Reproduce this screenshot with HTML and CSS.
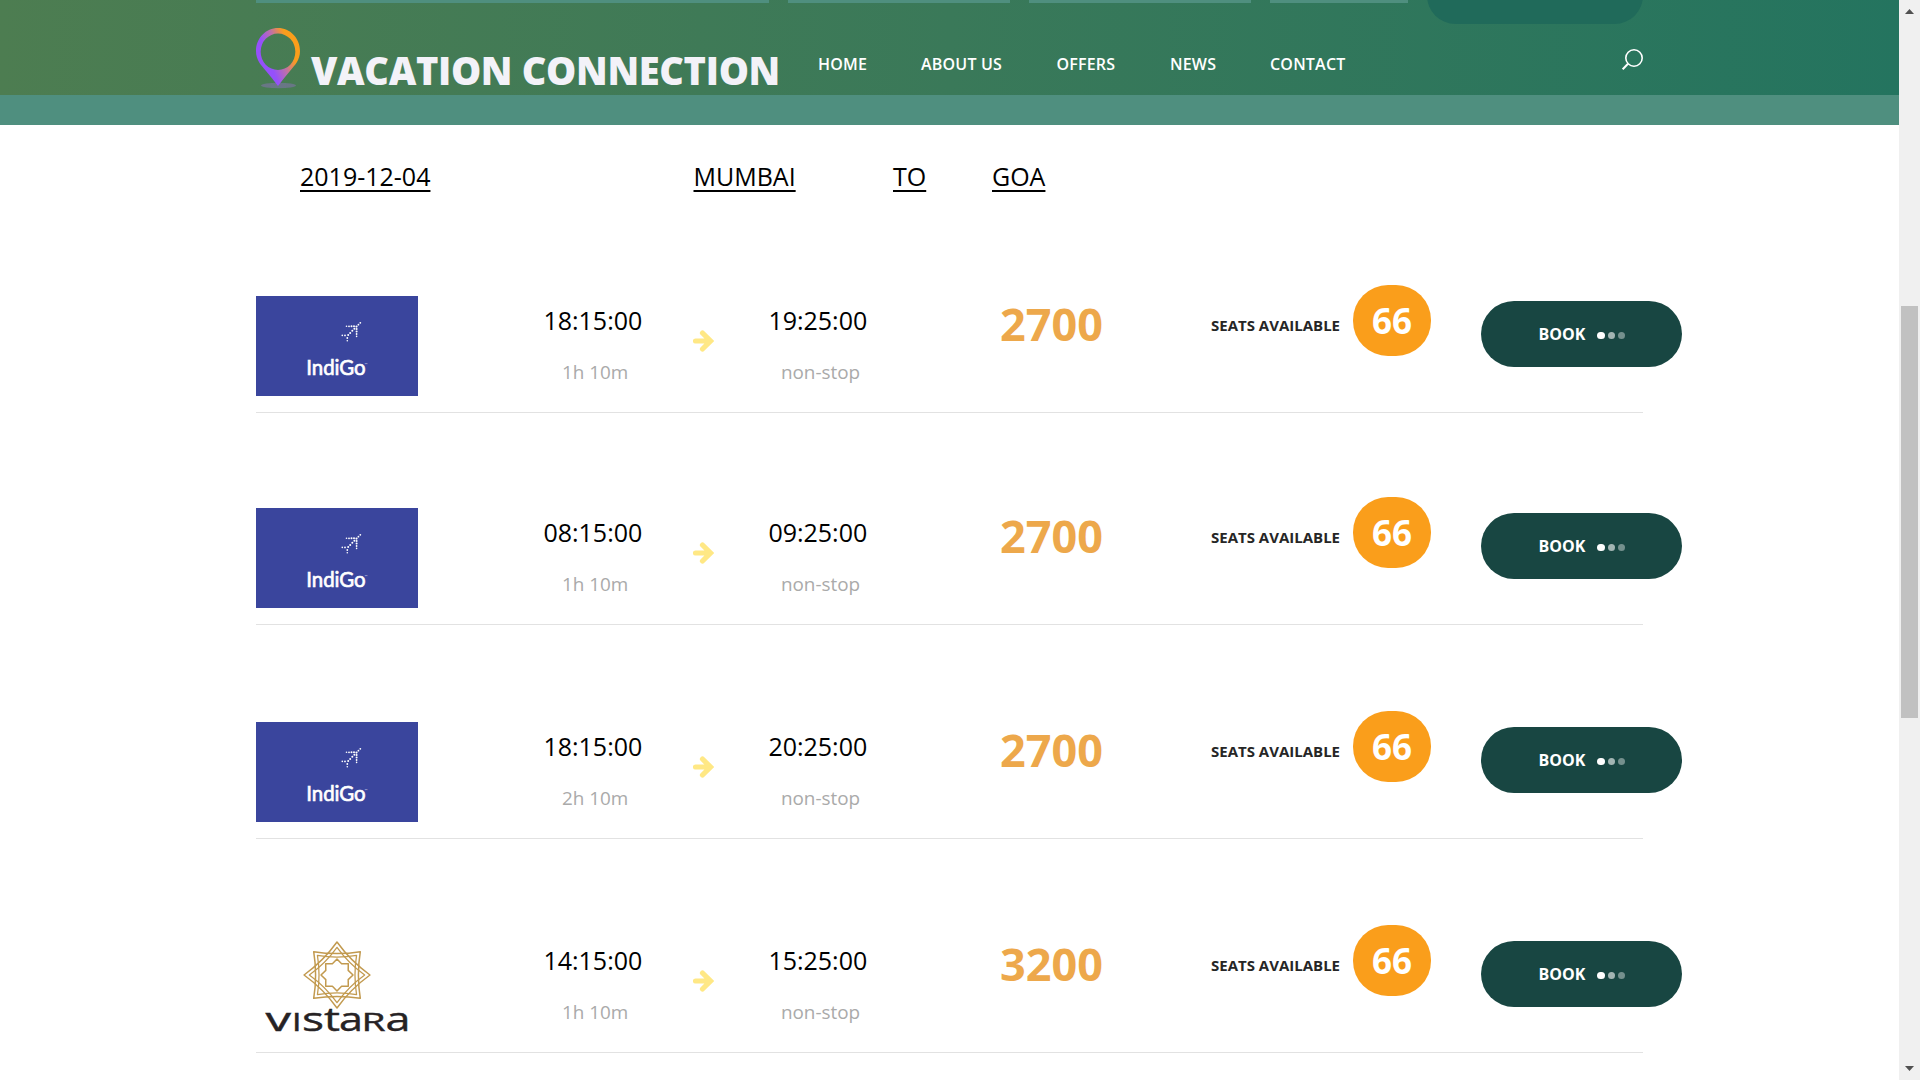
FILE: index.html
```
<!DOCTYPE html>
<html lang="en">
<head>
<meta charset="utf-8">
<title>Vacation Connection</title>
<link rel="stylesheet" href="styles.css">
</head>
<body>
<svg class="defs" width="0" height="0">
  <defs>
    <linearGradient id="pin" gradientUnits="userSpaceOnUse" x1="0" y1="0" x2="23" y2="-9.2">
      <stop offset="0" stop-color="#9550fb"/><stop offset="0.5" stop-color="#c070a8"/><stop offset="0.85" stop-color="#ee9040"/><stop offset="1" stop-color="#fa9e1b"/>
    </linearGradient>
    <symbol id="indigo" viewBox="0 0 162 100">
      <rect width="162" height="100" fill="#3a459d"/>
      <g fill="#fff">
        <circle cx="104.3" cy="26.8" r=".9"/><circle cx="102.4" cy="28.7" r=".9"/><circle cx="100.5" cy="30.6" r="1.1"/><circle cx="98.4" cy="32.7" r="1"/><circle cx="96.3" cy="34.8" r="1"/><circle cx="94.2" cy="36.9" r="1"/><circle cx="92.2" cy="39" r="1"/>
        <circle cx="98" cy="30.3" r="1"/><circle cx="95.5" cy="30.3" r="1"/><circle cx="93" cy="30.3" r=".9"/><circle cx="90.5" cy="30.3" r=".8"/>
        <circle cx="100.6" cy="33" r="1"/><circle cx="100.6" cy="35.5" r="1"/><circle cx="100.6" cy="38" r=".9"/><circle cx="100.6" cy="40.4" r=".8"/>
        <circle cx="89" cy="39.4" r=".9"/><circle cx="86.3" cy="39.4" r=".8"/><circle cx="91.3" cy="42" r=".9"/><circle cx="91.3" cy="44.8" r=".8"/>
      </g>
      <text class="indigo-word" x="50.2" y="79.200" textLength="59.500" lengthAdjust="spacingAndGlyphs">IndiGo</text>
      <text class="indigo-mark" x="108.500" y="70">™</text>
    </symbol>
    <path id="curvedsquare" d="M-23.3-23.3Q0-19.500 23.3-23.3Q19.500 0 23.3 23.3Q0 19.500-23.3 23.3Q-19.500 0-23.3-23.3Z"/>
    <path id="star" d="M0-16L4.6-11.2L11.3-11.3L11.2-4.6L16 0L11.2 4.6L11.3 11.3L4.6 11.2L0 16L-4.6 11.2L-11.3 11.3L-11.2 4.6L-16 0L-11.2-4.6L-11.3-11.3L-4.6-11.2Z"/>
    <symbol id="vistara" viewBox="0 0 162 100">
      <g transform="translate(81 39)" fill="none" stroke="#c29a4f" stroke-width="1.5" stroke-linejoin="round">
        <use href="#curvedsquare"/><use href="#curvedsquare" transform="rotate(45)"/>
        <use href="#curvedsquare" transform="scale(.84)"/><use href="#curvedsquare" transform="rotate(45) scale(.84)"/>
        <use href="#star" fill="#fff"/>
      </g>
      <g class="vistara-word">
        <text class="cap" x="9.500" y="95.3" textLength="25.500" lengthAdjust="spacingAndGlyphs">v</text>
        <text class="cap" x="36" y="95.3" textLength="9.500" lengthAdjust="spacingAndGlyphs">ı</text>
        <text class="cap" x="46" y="95.3" textLength="22" lengthAdjust="spacingAndGlyphs">s</text>
        <text x="68" y="95.3" textLength="16" lengthAdjust="spacingAndGlyphs">t</text>
        <text x="83" y="95.3" textLength="24" lengthAdjust="spacingAndGlyphs">a</text>
        <text class="small" x="105.500" y="95.3" textLength="24" lengthAdjust="spacingAndGlyphs">R</text>
        <text x="129.500" y="95.3" textLength="25" lengthAdjust="spacingAndGlyphs">a</text>
      </g>
    </symbol>
    <symbol id="arrow" viewBox="0 0 21 22">
      <path d="M2.5 11H15M9.5 3L17.5 11L9.500 19" fill="none" stroke="#ffe885" stroke-width="5.2" stroke-linecap="round" stroke-linejoin="miter"/>
    </symbol>
  </defs>
</svg>
<div class="window">
  <div class="page">
    <header class="header">
      <div class="search-fields"><span></span><span></span><span></span><span></span><b></b></div>
      <div class="brand">
        <svg class="pin" viewBox="0 0 44 62"><ellipse cx="22.5" cy="57.500" rx="17.5" ry="2.8" fill="#8a72b8" opacity=".5"/><path fill="url(#pin)" fill-rule="evenodd" d="M22 0C34 0 44 10 44 23C44 32 39 37 34 43Q28 50 22 58Q16 50 10 43C5 37 0 32 0 23C0 10 10 0 22 0ZM22 5.500A17.300 18.200 0 1 0 22 42A17.300 18.200 0 1 0 22 5.500Z"/></svg>
        <span class="brand-name">VACATION CONNECTION</span>
      </div>
      <nav class="nav"><a>HOME</a><a>ABOUT US</a><a>OFFERS</a><a>NEWS</a><a>CONTACT</a></nav>
      <svg class="search" viewBox="0 0 21 21" fill="none" stroke="#fff" stroke-width="1.6"><circle cx="12" cy="9" r="8.200"/><path d="M6 14.700L.7 20.300" stroke-width="2"/></svg>
    </header>
    <div class="band"></div>
    <main class="results">
      <div class="route"><u>2019-12-04</u><u>MUMBAI</u><u>TO</u><u>GOA</u></div>
      <section class="flight">
        <svg class="logo"><use href="#indigo"/></svg>
        <div class="time">18:15:00<small>1h 10m</small></div>
        <svg class="arrow"><use href="#arrow"/></svg>
        <div class="time arrive">19:25:00<small>non-stop</small></div>
        <div class="price">2700</div><div class="seats">SEATS AVAILABLE</div><div class="count">66</div>
        <a class="book">BOOK<i></i><i></i><i></i></a>
      </section>
      <section class="flight">
        <svg class="logo"><use href="#indigo"/></svg>
        <div class="time">08:15:00<small>1h 10m</small></div>
        <svg class="arrow"><use href="#arrow"/></svg>
        <div class="time arrive">09:25:00<small>non-stop</small></div>
        <div class="price">2700</div><div class="seats">SEATS AVAILABLE</div><div class="count">66</div>
        <a class="book">BOOK<i></i><i></i><i></i></a>
      </section>
      <section class="flight">
        <svg class="logo"><use href="#indigo"/></svg>
        <div class="time">18:15:00<small>2h 10m</small></div>
        <svg class="arrow"><use href="#arrow"/></svg>
        <div class="time arrive">20:25:00<small>non-stop</small></div>
        <div class="price">2700</div><div class="seats">SEATS AVAILABLE</div><div class="count">66</div>
        <a class="book">BOOK<i></i><i></i><i></i></a>
      </section>
      <section class="flight">
        <svg class="logo"><use href="#vistara"/></svg>
        <div class="time">14:15:00<small>1h 10m</small></div>
        <svg class="arrow"><use href="#arrow"/></svg>
        <div class="time arrive">15:25:00<small>non-stop</small></div>
        <div class="price">3200</div><div class="seats">SEATS AVAILABLE</div><div class="count">66</div>
        <a class="book">BOOK<i></i><i></i><i></i></a>
      </section>
    </main>
  </div>
  <div class="scrollbar">
    <svg width="9" height="5" viewBox="0 0 9 5"><path d="M0 5L4.500 0L9 5Z" fill="#505050"/></svg>
    <div class="thumb"></div>
    <svg width="9" height="5" viewBox="0 0 9 5"><path d="M0 0L4.500 5L9 0Z" fill="#505050"/></svg>
  </div>
</div>
</body>
</html>
```
FILE: styles.css
```
* { box-sizing: border-box; }
body { margin: 0; font-family: "Open Sans", sans-serif; background: #fff; overflow: hidden; }
.defs { position: absolute; }
.window { display: flex; height: 1080px; overflow: hidden; }
.page { flex: 1; min-width: 0; overflow: hidden; }
.header {
  position: relative; display: flex; align-items: flex-start; height: 95px; padding-left: 256px;
  background: linear-gradient(90deg, #4d7d51, #3a7959 50%, #24745f); overflow: hidden;
}
.search-fields {
  position: absolute; top: 0; left: 256px; display: grid; align-items: start;
  grid-template-columns: 513px 222px 222px 138px 217px; column-gap: 19px;
}
.search-fields span { height: 3px; background: #4f8f7f; }
.search-fields b { height: 57px; margin-top: -33px; width: 216px; border-radius: 33px; background: #206a5a; }
.brand { display: flex; width: 562px; padding-top: 28px; }
.pin { width: 44px; height: 62px; flex: none; }
.brand-name { margin: 16px 0 0 11px; font-size: 38px; line-height: 52px; font-weight: 800; letter-spacing: -.33px; color: #f3f2f8; white-space: nowrap; }
.nav { display: grid; grid-template-columns: 103px 135.500px 113.500px 100px 352px; padding-top: 54px; font-size: 16px; line-height: 20px; font-weight: 600; letter-spacing: .2px; color: #fff; white-space: nowrap; }
.search { width: 21px; height: 21px; margin-top: 49px; flex: none; }
.band { height: 30px; background: #4f8f7f; }
.results { padding-left: 256px; height: 955px; overflow: hidden; }
.route {
  display: grid; grid-template-columns: 393.500px 199.500px 99px 100px; padding: 32px 0 0 44px; height: 74px;
  font-size: 25px; line-height: 38px; color: #000;
}
.route u { text-decoration-thickness: 2px; text-underline-offset: 4px; justify-self: start; }
.flight {
  display: grid; grid-template-columns: 287.400px 149.600px 75.400px 231.600px 211px 142px 128px 201px; align-items: start; align-content: end;
  width: 1387px; height: 214px; padding-bottom: 16px; border-bottom: 1px solid #e2e2e2; white-space: nowrap;
}
.flight:nth-of-type(2) { height: 212px; }
.logo { width: 162px; height: 100px; margin-top: 11px; }
.indigo-word { font: 400 22px Lato, sans-serif; fill: #fff; stroke: #fff; stroke-width: .7px; }
.indigo-mark { font: 400 4px Lato, sans-serif; fill: #c8cce8; }
.vistara-word { font: 400 33px "Open Sans", sans-serif; fill: #262224; stroke: #262224; stroke-width: .4px; }
.vistara-word .small { font-size: 25px; }
.time { margin-top: 20px; font-size: 25px; line-height: 30px; color: #000; }
.time small { display: block; margin: 22px 0 0 18.500px; font-size: 18.900px; line-height: 30px; color: #aaa; }
.arrive small { margin-left: 12.500px; }
.arrow { width: 21px; height: 22px; margin-top: 45px; }
.price { margin-top: 9px; font-size: 45px; line-height: 60px; font-weight: 700; color: #eda84b; }
.seats { margin-top: 30px; font-size: 15px; line-height: 20px; font-weight: 700; color: #262626; }
.count { width: 78px; height: 71px; border-radius: 35px; background: #fa9e1b; color: #fff; font-size: 35px; line-height: 71px; font-weight: 700; text-align: center; }
.book { display: flex; align-items: center; gap: 3px; height: 66px; width: 201px; margin-top: 16px; padding-left: 57.500px; border-radius: 33px; background: #184642; color: #fff; font-size: 16px; font-weight: 700; }
.book i { width: 7px; height: 7px; border-radius: 4px; background: #fff; opacity: .5; margin-top: 2px; }
.book i:first-of-type { width: 8px; margin-left: 9px; opacity: 1; }
.book i:nth-of-type(2) { opacity: .6; }
.book i:nth-of-type(3) { opacity: .4; }
.scrollbar { display: flex; flex-direction: column; align-items: center; width: 21px; padding: 9px 0; background: #f0f0f0; }
.thumb { width: 17px; height: 412px; margin: 292px 0 348px; background: #c1c1c1; flex: none; }
```
